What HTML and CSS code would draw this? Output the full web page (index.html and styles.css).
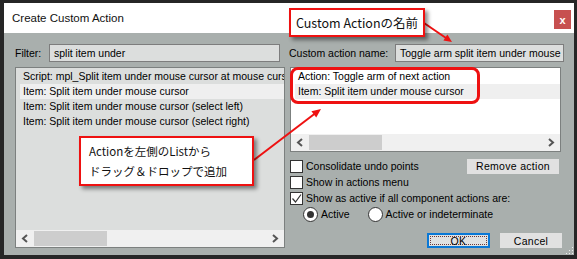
FILE: index.html
```html
<!DOCTYPE html>
<html lang="ja">
<head>
  <meta charset="UTF-8">
  <title>Create Custom Action</title>
  <link rel="stylesheet" href="styles.css">
</head>
<body>

  <div id="desk">

    <div class="win">
      <div class="titlebar">
        <span class="title">Create Custom Action</span>
        <span class="close">x</span>
      </div>

      <div class="panel">

        <div class="col">
          <div class="field">
            <span class="lbl lbl-filter">Filter:</span>
            <div class="input input-filter">split item under</div>
          </div>
          <div class="list list-left">
            <div class="rows">
              <div class="row">Script: mpl_Split item under mouse cursor at mouse cursor position</div>
              <div class="row sel">Item: Split item under mouse cursor</div>
              <div class="row">Item: Split item under mouse cursor (select left)</div>
              <div class="row">Item: Split item under mouse cursor (select right)</div>
            </div>
            <div class="hscroll">
              <span class="arrow"><svg width="8" height="9" viewBox="0 0 8 9"><path d="M6 1 L2 4.5 L6 8" fill="none" stroke="#555" stroke-width="2"/></svg></span>
              <span class="thumb"></span>
              <span class="arrow arrow-r"><svg width="8" height="9" viewBox="0 0 8 9"><path d="M2 1 L6 4.5 L2 8" fill="none" stroke="#555" stroke-width="2"/></svg></span>
            </div>
          </div>
        </div>

        <div class="col">
          <div class="field">
            <span class="lbl lbl-name">Custom action name:</span>
            <div class="input input-name">Toggle arm split item under mouse cursor</div>
          </div>
          <div class="list list-right">
            <div class="rows">
              <div class="row">Action: Toggle arm of next action</div>
              <div class="row sel">Item: Split item under mouse cursor</div>
            </div>
            <div class="hscroll">
              <span class="arrow"><svg width="8" height="9" viewBox="0 0 8 9"><path d="M6 1 L2 4.5 L6 8" fill="none" stroke="#555" stroke-width="2"/></svg></span>
              <span class="thumb"></span>
              <span class="arrow arrow-r"><svg width="8" height="9" viewBox="0 0 8 9"><path d="M2 1 L6 4.5 L2 8" fill="none" stroke="#555" stroke-width="2"/></svg></span>
            </div>
          </div>

          <div class="opts">
            <div class="opt">
              <span class="check"></span>
              <span>Consolidate undo points</span>
              <span class="btn btn-remove">Remove action</span>
            </div>
            <div class="opt">
              <span class="check"></span>
              <span>Show in actions menu</span>
            </div>
            <div class="opt">
              <span class="check"><svg width="11" height="11" viewBox="0 0 11 11"><path d="M1.5 5.5 L4.5 9 L10 1.5" fill="none" stroke="#333" stroke-width="1.2"/></svg></span>
              <span>Show as active if all component actions are:</span>
            </div>
            <div class="opt opt-radio">
              <span class="radio on"></span>
              <span class="radio-lbl">Active</span>
              <span class="radio"></span>
              <span>Active or indeterminate</span>
            </div>
          </div>

          <div class="buttons">
            <span class="btn btn-ok"><span>OK</span></span>
            <span class="btn btn-cancel">Cancel</span>
          </div>
        </div>

      </div>
    </div>

    <svg class="grip" width="8" height="8" viewBox="0 0 8 8">
      <rect x="6" y="0" width="1" height="1" fill="#eee"/>
      <rect x="3" y="3" width="1" height="1" fill="#eee"/>
      <rect x="6" y="3" width="1" height="1" fill="#eee"/>
      <rect x="0" y="6" width="1" height="1" fill="#eee"/>
      <rect x="3" y="6" width="1" height="1" fill="#eee"/>
      <rect x="6" y="6" width="1" height="1" fill="#eee"/>
    </svg>

    <!-- annotations -->
    <div class="ring"></div>
    <svg class="arrows" width="577" height="259" viewBox="0 0 577 259">
      <line x1="424" y1="23" x2="446" y2="38" stroke="#ee1111" stroke-width="2"/>
      <polygon points="452,42 443.4,40.4 447.4,34.6" fill="#ee1111"/>
      <line x1="254" y1="160" x2="315" y2="113.5" stroke="#ee1111" stroke-width="2"/>
      <polygon points="321,109 316.2,117.6 311.4,111.3" fill="#ee1111"/>
    </svg>
    <div class="note note-name">Custom Actionの名前</div>
    <div class="note note-drag">Actionを左側のListから<br>ドラッグ＆ドロップで追加</div>

  </div>

</body>
</html>
```

FILE: styles.css
```css
*{
  margin: 0;
  padding: 0;
  box-sizing: border-box;
}

body{
  background-color: #262626;
  font-family: "Liberation Sans", Arial, sans-serif;
  font-size: 10.5px;
  color: #000000;
}

#desk{
  position: relative;
  width: 577px;
  height: 259px;
  overflow: hidden;
  padding: 3px 0 0 4px;
}

.win{
  width: 570px;
  height: 252px;
  display: flex;
  flex-direction: column;
  background-color: #a9afad;
}

.titlebar{
  height: 30px;
  background-color: #ffffff;
  display: flex;
  justify-content: space-between;
  align-items: flex-start;
  padding-left: 8px;
}

.title{
  font-size: 11.5px;
  line-height: 30px;
  color: #111111;
}

.close{
  width: 17px;
  height: 19px;
  margin: 7px 3px 0 0;
  background-color: #c75050;
  color: #ffffff;
  font: bold 11px "Liberation Sans", Arial, sans-serif;
  display: flex;
  justify-content: center;
  align-items: center;
}

.panel{
  flex: 1;
  display: grid;
  grid-template-columns: 270px 275px;
  column-gap: 4px;
  padding: 11px 10px 8px 11px;
}

.col{
  display: flex;
  flex-direction: column;
}

.field{
  display: flex;
  align-items: center;
  height: 18px;
}

.lbl{
  white-space: nowrap;
}
.lbl-filter{
  width: 34px;
}
.lbl-name{
  width: 106px;
}

.input{
  height: 18px;
  line-height: 16px;
  border: 1px solid #7d7d7d;
  background-color: #dcdedd;
  padding-left: 4px;
  white-space: nowrap;
  overflow: hidden;
}
.input-filter{
  width: 231px;
}
.input-name{
  width: 169px;
}

.list{
  margin-top: 5px;
  border: 1px solid #7c807f;
  display: flex;
  flex-direction: column;
}
.list-left{
  height: 181px;
  background-color: #dcdedd;
}
.list-right{
  width: 271px;
  margin-left: 1px;
  height: 85px;
  background-color: #ffffff;
}

.rows{
  flex: 1;
  padding-top: 1px;
  overflow: hidden;
}

.row{
  height: 15px;
  line-height: 15px;
  margin-left: 4px;
  padding-left: 3px;
  white-space: nowrap;
}
.sel{
  background-color: #efefef;
}

.hscroll{
  height: 17px;
  background-color: #f0f0f0;
  display: flex;
  align-items: center;
}
.arrow{
  width: 18px;
  height: 17px;
  display: flex;
  justify-content: center;
  align-items: center;
}
.arrow-r{
  margin-left: auto;
}
.thumb{
  width: 73px;
  height: 15px;
  background-color: #cdcdcd;
}

.opts{
  margin-top: 6px;
  display: flex;
  flex-direction: column;
}

.opt{
  height: 16px;
  display: flex;
  align-items: center;
  gap: 3px;
  white-space: nowrap;
}

.check{
  width: 13px;
  height: 13px;
  margin-left: 1px;
  border: 1px solid #333333;
  background-color: #ffffff;
  display: flex;
  justify-content: center;
  align-items: center;
}

.opt-radio{
  padding-left: 14px;
}
.radio{
  width: 15px;
  height: 15px;
  border: 1px solid #333333;
  border-radius: 50%;
  background-color: #ffffff;
  display: flex;
  justify-content: center;
  align-items: center;
}
.radio.on::after{
  content: "";
  width: 7px;
  height: 7px;
  border-radius: 50%;
  background-color: #333333;
}
.radio-lbl{
  margin-right: 15px;
}

.btn{
  height: 15px;
  background-color: #e1e1e1;
  display: flex;
  justify-content: center;
  align-items: center;
  letter-spacing: 0.3px;
}
.btn-remove{
  width: 92px;
  margin: 0 5px 0 auto;
}

.buttons{
  margin-top: 11px;
  display: flex;
  justify-content: flex-end;
  gap: 10px;
  padding-right: 2px;
}
.btn-ok{
  width: 63px;
  border: 2px solid #0a78d6;
  padding: 1px;
}
.btn-ok span{
  flex: 1;
  height: 100%;
  border: 1px dotted #6b3a3a;
  display: flex;
  justify-content: center;
  align-items: center;
}
.btn-cancel{
  width: 62px;
}

.grip{
  position: absolute;
  left: 566px;
  top: 247px;
}

/* annotations */
.ring{
  position: absolute;
  left: 290px;
  top: 67px;
  width: 190px;
  height: 37px;
  border: 3px solid #ee1111;
  border-radius: 8px;
}

.arrows{
  position: absolute;
  left: 0;
  top: 0;
}

.note{
  position: absolute;
  background-color: #ffffff;
  border: 2px solid #ee1111;
  box-shadow: 3px 3px 4px rgba(0, 0, 0, 0.45);
  font-family: "Noto Sans CJK JP", "Noto Sans", sans-serif;
  color: #111111;
}
.note-name{
  left: 289px;
  top: 8px;
  width: 136px;
  height: 29px;
  font-size: 12.5px;
  line-height: 25px;
  text-align: center;
}
.note-drag{
  left: 79px;
  top: 136px;
  width: 175px;
  height: 50px;
  font-size: 11.5px;
  line-height: 20px;
  padding: 3px 0 0 8px;
}
```
